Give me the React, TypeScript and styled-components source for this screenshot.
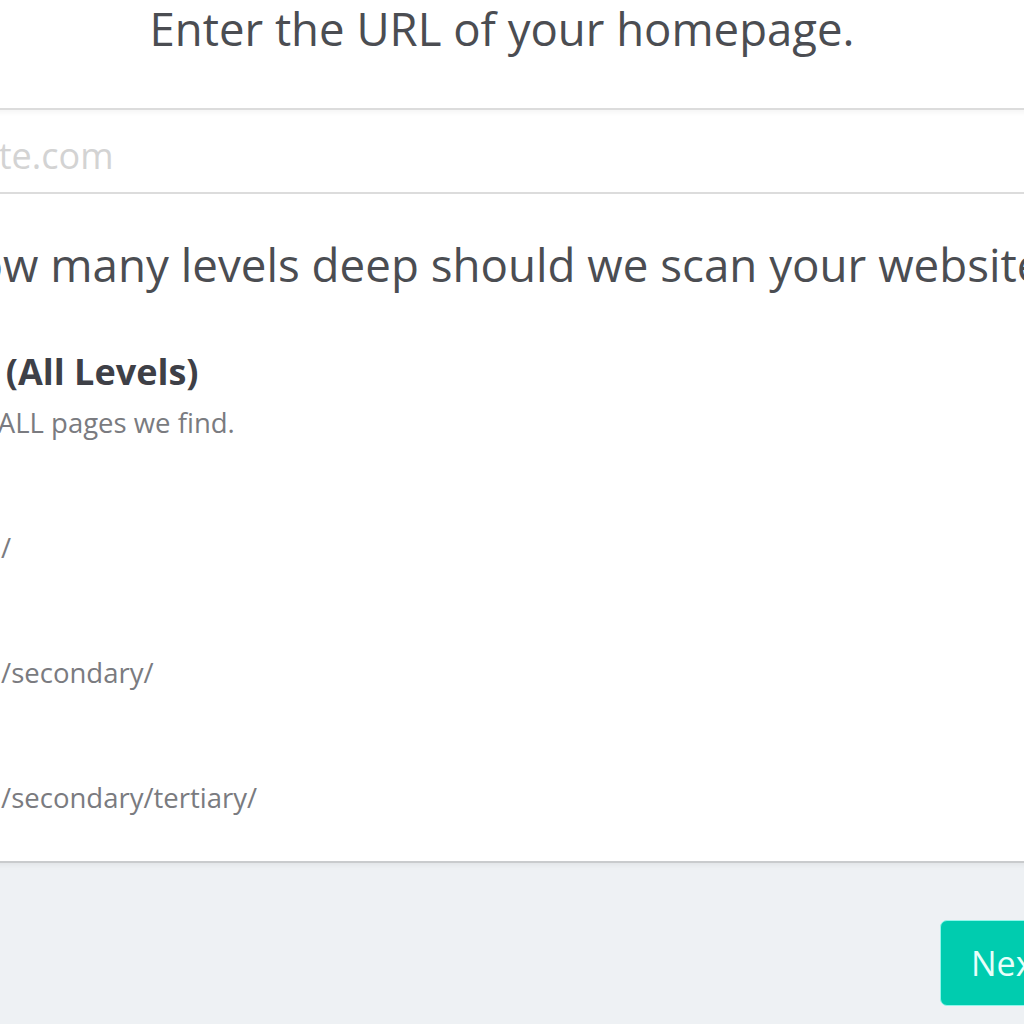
import React from "react";
import styled, { createGlobalStyle } from "styled-components";

type Level = {
	title: string;
	detail: string;
};

const levels: Level[] = [
	{ title: "Limitless (All Levels)", detail: "We will scan ALL pages we find." },
	{ title: "1 Level", detail: "yoursite.com/" },
	{ title: "2 Levels", detail: "yoursite.com/secondary/" },
	{ title: "3 Levels", detail: "yoursite.com/secondary/tertiary/" },
];

const App = () => {
	return (
		<>
			<GlobalStyle />
			<Viewport>
				<Page>
					<Panel>
						<Heading>Enter the URL of your homepage.</Heading>
						<UrlInput type="text" placeholder="mywebsite.com" />
						<Question>How many levels deep should we scan your website?</Question>
						<Options>
							{levels.map((level) => (
								<Option key={level.title}>
									<OptionTitle>{level.title}</OptionTitle>
									<OptionDetail>{level.detail}</OptionDetail>
								</Option>
							))}
						</Options>
					</Panel>
					<Footer>
						<NextButton>Next</NextButton>
					</Footer>
				</Page>
			</Viewport>
		</>
	);
};

const GlobalStyle = createGlobalStyle`
	html, body {
		margin: 0;
		padding: 0;
		background: #eef1f4;
	}
	body {
		font-family: "Open Sans", "Noto Sans", sans-serif;
	}
`;

const Viewport = styled.div`
	width: 1024px;
	height: 1024px;
	overflow: hidden;
	background: #eef1f4;
`;

const Page = styled.div`
	width: 1604px;
	margin-left: -300px;
`;

const Panel = styled.section`
	background: #fff;
	border-bottom: 2px solid #c9cbcd;
	box-shadow: 0 2px 6px rgba(0, 0, 0, 0.06);
	padding: 0 135px;
	height: 863px;
	box-sizing: border-box;
`;

const Heading = styled.h1`
	margin: 0;
	text-align: center;
	font-size: 45.5px;
	font-weight: 400;
	line-height: 56px;
	color: #4b4d52;
	white-space: nowrap;
`;

const UrlInput = styled.input`
	display: block;
	box-sizing: border-box;
	width: 100%;
	height: 86px;
	margin-top: 52px;
	padding: 8px 16px 0;
	border: none;
	border-top: 2px solid #dcdcdc;
	border-bottom: 2px solid #dcdcdc;
	box-shadow: inset 0 3px 4px rgba(0, 0, 0, 0.04);
	font-family: "Open Sans", sans-serif;
	font-size: 36px;
	color: #444;
	outline: none;
	&::placeholder {
		color: #d3d3d3;
	}
`;

const Question = styled.h2`
	margin: 37px 0 0;
	text-align: center;
	font-size: 45.7px;
	font-weight: 400;
	line-height: 66px;
	color: #4b4d52;
	white-space: nowrap;
`;

const Options = styled.div`
	display: flex;
	flex-direction: column;
	gap: 34px;
	margin-top: 53px;
`;

const Option = styled.div`
	display: flex;
	flex-direction: column;
	gap: 11px;
`;

const OptionTitle = styled.div`
	font-size: 36px;
	font-weight: 700;
	line-height: 44px;
	color: #3e4047;
	white-space: nowrap;
`;

const OptionDetail = styled.div`
	font-size: 27.5px;
	line-height: 36px;
	color: #7a7b80;
	white-space: nowrap;
`;

const Footer = styled.div`
	display: flex;
	padding: 57px 0 0 1240px;
`;

const NextButton = styled.button`
	height: 86px;
	padding: 0 30px;
	border: 1px solid #8ff6ea;
	border-radius: 7px;
	background: #00ccaf;
	color: #e8fffa;
	font-family: "Open Sans", sans-serif;
	font-size: 34px;
	cursor: pointer;
`;

export default App;
